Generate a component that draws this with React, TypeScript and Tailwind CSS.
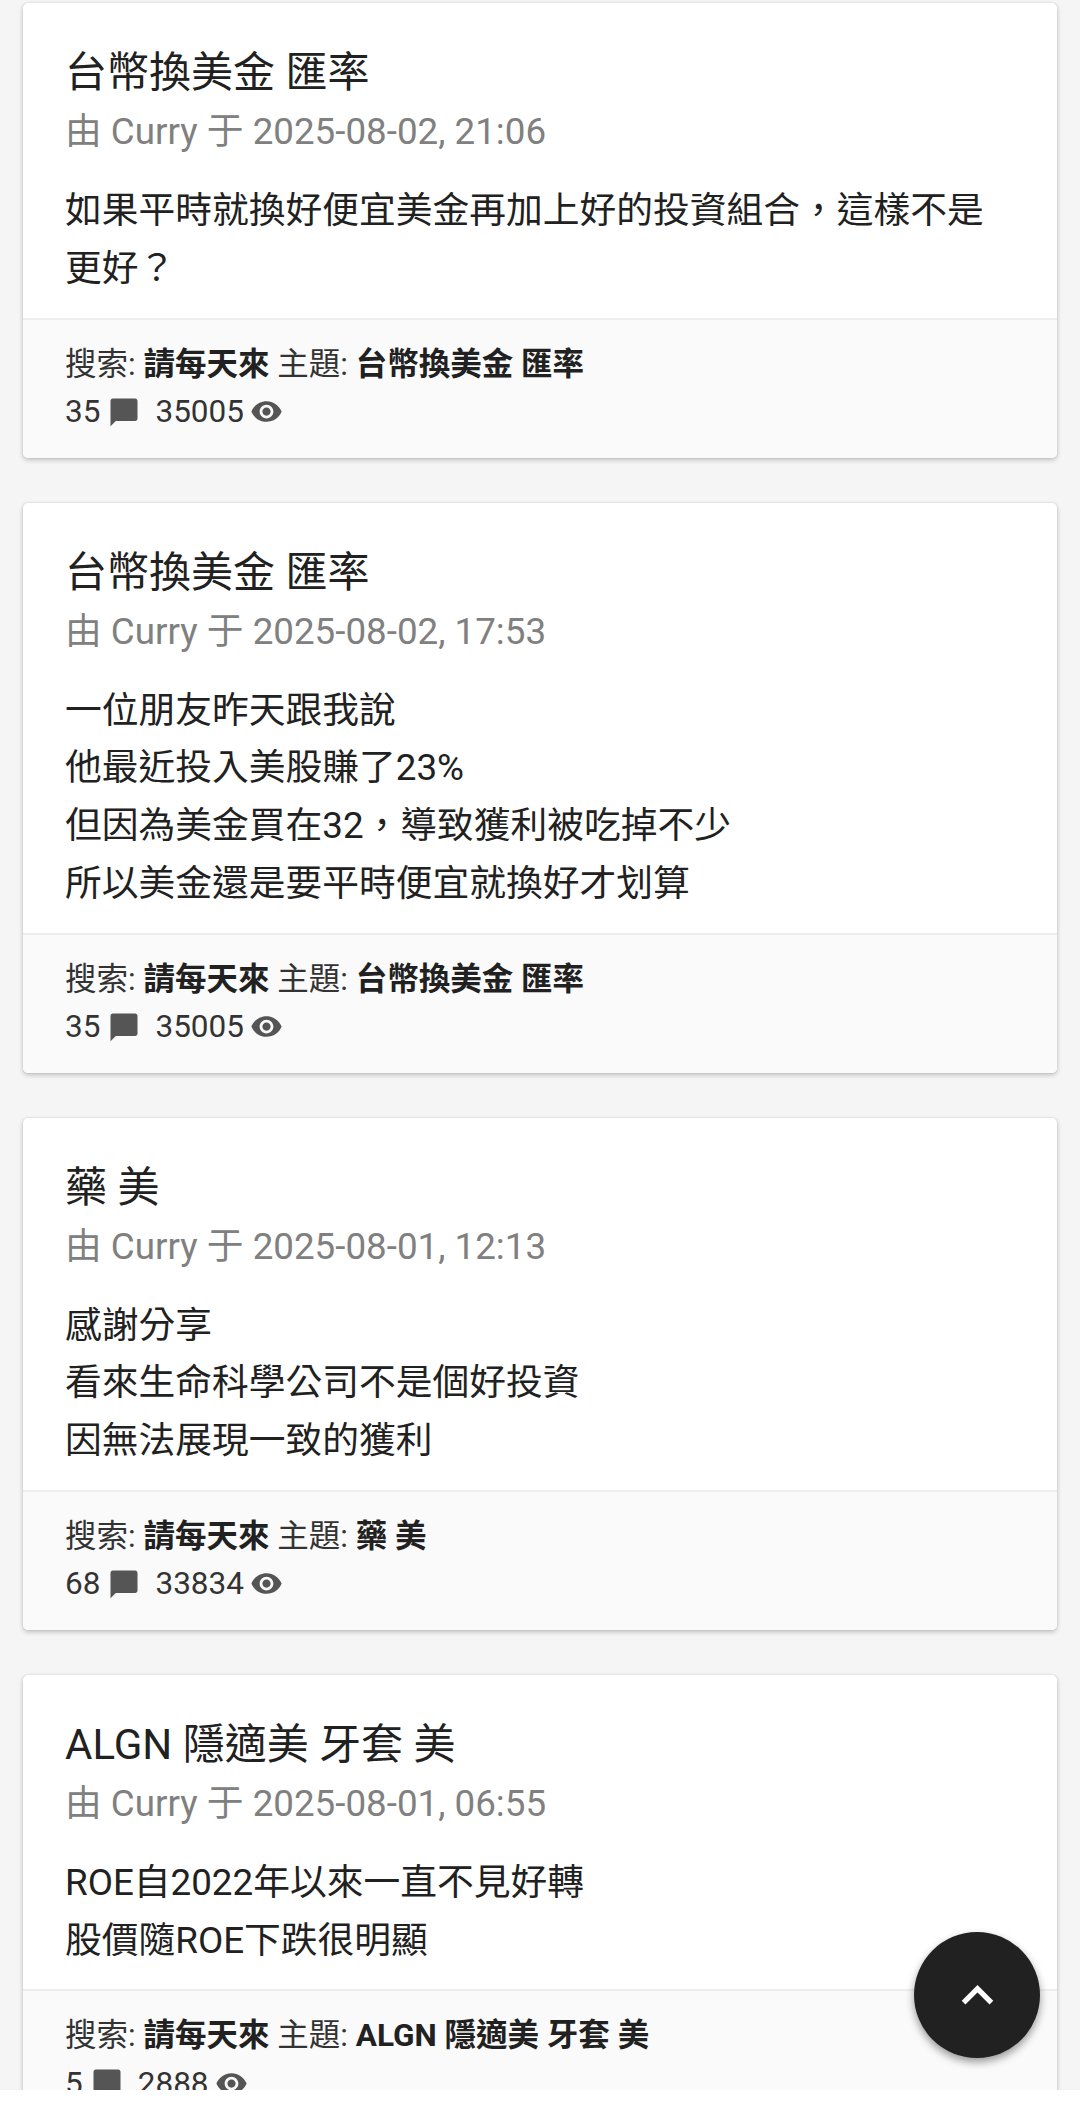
const posts = [
  {
    title: '台幣換美金 匯率',
    date: '2025-08-02, 21:06',
    lines: ['如果平時就換好便宜美金再加上好的投資組合，這樣不是更好？'],
    replies: 35,
    views: 35005,
  },
  {
    title: '台幣換美金 匯率',
    date: '2025-08-02, 17:53',
    lines: ['一位朋友昨天跟我說', '他最近投入美股賺了23%', '但因為美金買在32，導致獲利被吃掉不少', '所以美金還是要平時便宜就換好才划算'],
    replies: 35,
    views: 35005,
  },
  {
    title: '藥 美',
    date: '2025-08-01, 12:13',
    lines: ['感謝分享', '看來生命科學公司不是個好投資', '因無法展現一致的獲利'],
    replies: 68,
    views: 33834,
  },
  {
    title: 'ALGN 隱適美 牙套 美',
    date: '2025-08-01, 06:55',
    lines: ['ROE自2022年以來一直不見好轉', '股價隨ROE下跌很明顯'],
    replies: 5,
    views: 2888,
  },
];

const CommentIcon = () => (
  <svg viewBox="0 0 24 24" className="ml-[6px] h-[36px] w-[36px] fill-[#555]">
    <path d="M21 4.5c0-.8-.7-1.500-1.500-1.500h-15C3.700 3 3 3.700 3 4.500v17l3.500-3.500h13c.8 0 1.500-.7 1.500-1.500z" />
  </svg>
);

const EyeIcon = () => (
  <svg viewBox="0 0 24 24" className="ml-[6px] h-[33px] w-[33px] fill-[#555]">
    <path d="M12 4.500C7 4.500 2.730 7.610 1 12c1.730 4.390 6 7.500 11 7.500s9.270-3.110 11-7.500c-1.730-4.390-6-7.500-11-7.500zM12 17c-2.760 0-5-2.240-5-5s2.240-5 5-5 5 2.240 5 5-2.240 5-5 5zm0-8c-1.660 0-3 1.340-3 3s1.340 3 3 3 3-1.340 3-3-1.340-3-3-3z" />
  </svg>
);

const App = () => {
  return (
    <div className="relative h-[2103px] w-[1080px] overflow-hidden bg-white font-['Roboto','Noto_Sans_CJK_TC',sans-serif]">
      <div className="h-[2090px] overflow-hidden bg-[#f5f5f5] px-[23px] pt-[3px]">
        <div className="flex flex-col gap-[45px]">
          {posts.map((post, i) => (
            <div key={i} className="overflow-hidden rounded-[5px] bg-white shadow-[0_2px_5px_rgba(0,0,0,0.22),0_0_2px_rgba(0,0,0,0.12)]">
              <div className="px-[42px] pt-[40px] pb-[20px]">
                <h2 className="text-[42px] leading-[60px] font-normal text-[#212121]">{post.title}</h2>
                <p className="text-[36.75px] leading-[58px] text-[#808080]">
                  由 Curry 于 {post.date}
                </p>
                <div className="mt-[21px] text-[36.75px] leading-[57.75px] text-[#212121]">
                  {post.lines.map((line, j) => (
                    <p key={j}>{line}</p>
                  ))}
                </div>
              </div>
              <div className="border-t-2 border-[#eeeeee] bg-[#fafafa] px-[42px] pt-[21px] pb-[22px] text-[31.5px] leading-[47px] text-[#333333]">
                <p>
                  搜索: <b className="font-bold text-[#212121]">請每天來</b> 主題: <b className="font-bold text-[#212121]">{post.title}</b>
                </p>
                <div className="flex h-[48px] items-center">
                  <span>{post.replies}</span>
                  <CommentIcon />
                  <span className="ml-[13px]">{post.views}</span>
                  <EyeIcon />
                </div>
              </div>
            </div>
          ))}
        </div>
      </div>
      <button className="absolute top-[1932px] left-[914px] flex h-[126px] w-[126px] items-center justify-center rounded-full bg-[#212121] shadow-[0_4px_8px_rgba(0,0,0,0.4)]">
        <svg viewBox="0 0 24 24" className="h-[63px] w-[63px] fill-white">
          <path d="M7.41 15.41L12 10.830l4.590 4.580L18 14l-6-6-6 6z" />
        </svg>
      </button>
    </div>
  );
};

export default App;
